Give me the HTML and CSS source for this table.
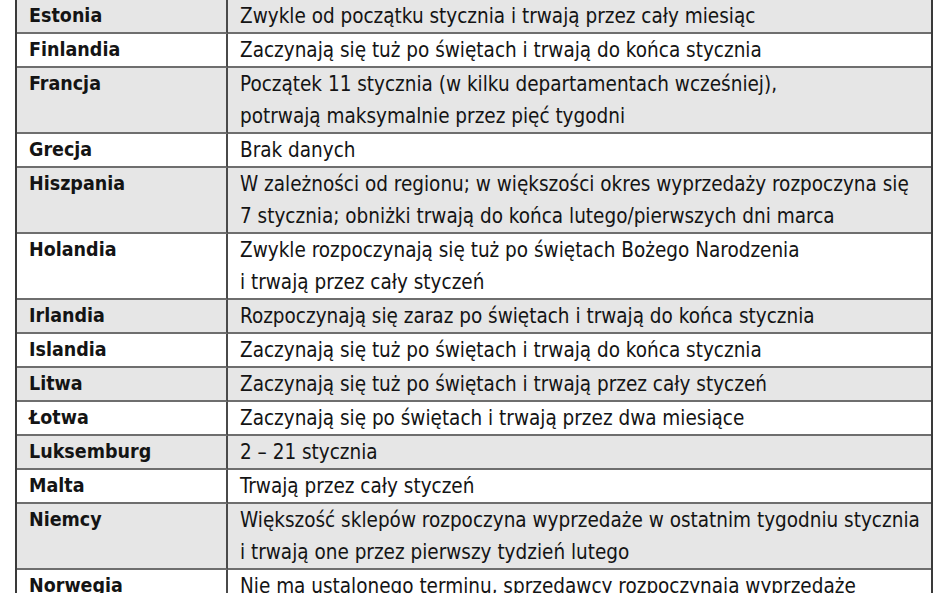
FILE: index.html
```html
<!DOCTYPE html>
<html lang="pl">
<head>
<meta charset="utf-8">
<link rel="stylesheet" href="styles.css">
</head>
<body>
<table class="sales">
  <tr class="alt"><td class="country">Estonia</td><td class="desc">Zwykle od początku stycznia i trwają przez cały miesiąc</td></tr>
  <tr><td class="country">Finlandia</td><td class="desc">Zaczynają się tuż po świętach i trwają do końca stycznia</td></tr>
  <tr class="alt"><td class="country">Francja</td><td class="desc">Początek 11 stycznia (w kilku departamentach wcześniej),<br>potrwają maksymalnie przez pięć tygodni</td></tr>
  <tr><td class="country">Grecja</td><td class="desc">Brak danych</td></tr>
  <tr class="alt"><td class="country">Hiszpania</td><td class="desc">W zależności od regionu; w większości okres wyprzedaży rozpoczyna się<br>7 stycznia; obniżki trwają do końca lutego/pierwszych dni marca</td></tr>
  <tr><td class="country">Holandia</td><td class="desc">Zwykle rozpoczynają się tuż po świętach Bożego Narodzenia<br>i trwają przez cały styczeń</td></tr>
  <tr class="alt"><td class="country">Irlandia</td><td class="desc">Rozpoczynają się zaraz po świętach i trwają do końca stycznia</td></tr>
  <tr><td class="country">Islandia</td><td class="desc">Zaczynają się tuż po świętach i trwają do końca stycznia</td></tr>
  <tr class="alt"><td class="country">Litwa</td><td class="desc">Zaczynają się tuż po świętach i trwają przez cały styczeń</td></tr>
  <tr><td class="country">Łotwa</td><td class="desc">Zaczynają się po świętach i trwają przez dwa miesiące</td></tr>
  <tr class="alt"><td class="country">Luksemburg</td><td class="desc">2 – 21 stycznia</td></tr>
  <tr><td class="country">Malta</td><td class="desc">Trwają przez cały styczeń</td></tr>
  <tr class="alt"><td class="country">Niemcy</td><td class="desc">Większość sklepów rozpoczyna wyprzedaże w ostatnim tygodniu stycznia<br>i trwają one przez pierwszy tydzień lutego</td></tr>
  <tr><td class="country">Norwegia</td><td class="desc">Nie ma ustalonego terminu, sprzedawcy rozpoczynają wyprzedaże</td></tr>
</table>
</body>
</html>
```

FILE: styles.css
```css
html, body {
  margin: 0;
  padding: 0;
  background: #ffffff;
}

body {
  overflow: hidden;
}

.sales {
  margin-left: 15px;
  width: 918px;
  table-layout: fixed;
  border-collapse: separate;
  border-spacing: 0;
  border-left: 2px solid #3a3a3a;
  border-right: 2px solid #3a3a3a;
  font-family: "DejaVu Sans Condensed", "Liberation Sans", sans-serif;
  font-size: 20.5px;
  line-height: 32px;
  color: #141414;
}

.sales td {
  padding: 0 0 0 12px;
  vertical-align: top;
  border-bottom: 2px solid #6e6e6e;
  white-space: nowrap;
  overflow: hidden;
}

.sales tr.alt td {
  background: #e6e6e6;
}

.country {
  width: 197px;
  font-weight: bold;
  font-size: 19.5px;
  border-right: 2px solid #4a4a4a;
}
```
